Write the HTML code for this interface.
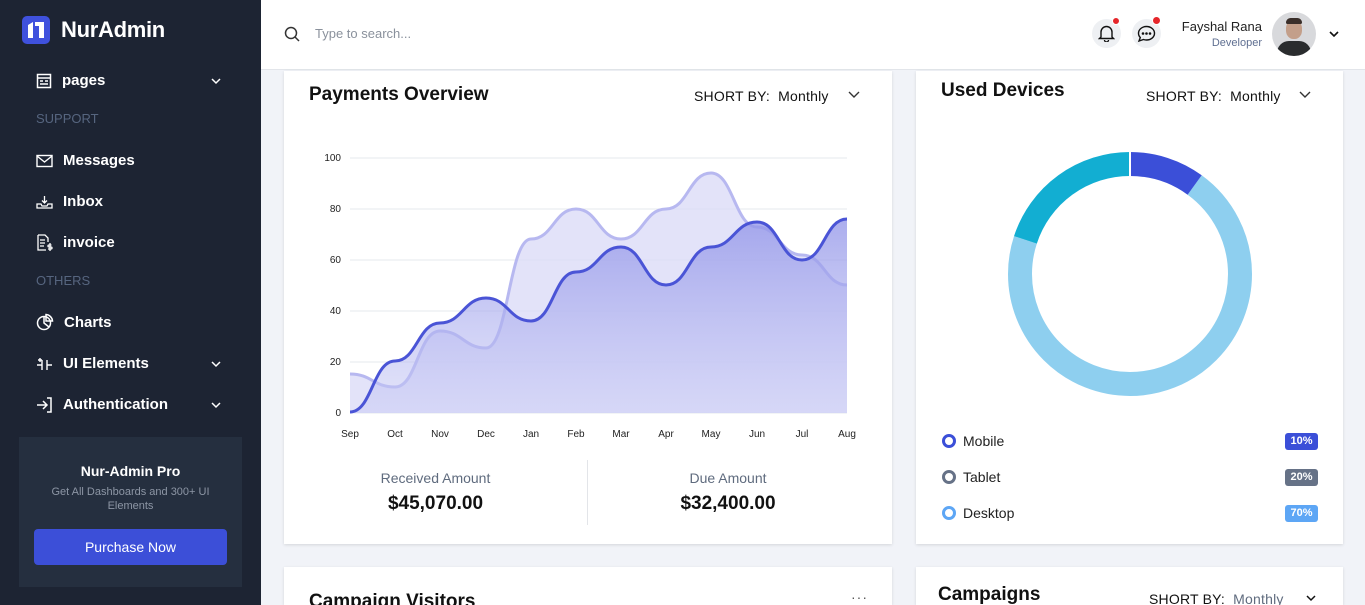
<!DOCTYPE html>
<html style="overflow:hidden;width:1365px;height:605px"><head><meta charset="utf-8"><style>
*{box-sizing:border-box;margin:0;padding:0}
body{width:1365px;height:605px;overflow:hidden;background:#f1f3f8;font-family:"Liberation Sans",sans-serif;position:relative}
.sb{position:absolute;left:0;top:0;width:261px;height:605px;background:#1d2433;color:#fff}
.logo{position:absolute;left:22px;top:16px;width:28px;height:28px;background:#3f51dd;border-radius:5px}
.brand{position:absolute;left:61px;top:17px;font-size:22px;font-weight:bold;letter-spacing:-0.3px}
.it{position:absolute;left:36px;font-size:15px;font-weight:bold;display:flex;align-items:center}
.it svg{margin-right:10px}
.sec{position:absolute;left:36px;font-size:13px;color:#56657f}
.chev{position:absolute;left:210px}
.pro{position:absolute;left:19px;top:437px;width:223px;height:150px;background:#252f3f;text-align:center}
.hdr{position:absolute;left:261px;top:0;width:1104px;height:70px;background:#fff;border-bottom:1px solid #e2e5ea}
.card{position:absolute;background:#fff;box-shadow:0 1px 3px rgba(0,0,0,.12)}
.t{font-size:19px;font-weight:bold;color:#111;position:absolute}
.sort{position:absolute;font-size:14px;color:#111;letter-spacing:.2px}
.lg{position:absolute;left:942px;font-size:14px;color:#222;display:flex;align-items:center}
.lg i{width:14px;height:14px;border:3px solid;border-radius:50%;margin-right:7px}
.bd{position:absolute;left:1285px;width:33px;height:17px;border-radius:3px;color:#fff;font-size:11px;font-weight:bold;text-align:center;line-height:17px}
</style></head><body>
<div class="sb">
 <div class="logo"><svg width="28" height="28"><path d="M6 9 L11 6 V22 H6Z M13 6 H22 V22 H17 V10 H13Z" fill="#fff"/></svg></div>
 <div class="brand">NurAdmin</div>
 <div class="it" style="top:72px"><svg width="16" height="16" fill="none" stroke="#fff" stroke-width="1.5"><rect x="1.5" y="1.5" width="13" height="13"/><path d="M1.5 5h13M4 8h3M4 11h8M9 8h3"/></svg>pages</div>
 <svg class="chev" style="top:76px" width="12" height="10"><path d="M2 3l4 4 4-4" stroke="#fff" stroke-width="1.5" fill="none"/></svg>
 <div class="sec" style="top:111px">SUPPORT</div>
 <div class="it" style="top:152px"><svg width="17" height="14" fill="none" stroke="#fff" stroke-width="1.4"><rect x="1" y="1.5" width="15" height="11"/><path d="M1 2l7.5 6L16 2"/></svg>Messages</div>
 <div class="it" style="top:193px"><svg width="17" height="14" fill="none" stroke="#fff" stroke-width="1.3"><path d="M8.5 1v7M6 5.5l2.5 2.5 2.5-2.5M1 9h4l1 2h5l1-2h4v4H1z"/></svg>Inbox</div>
 <div class="it" style="top:234px"><svg width="17" height="17" fill="none" stroke="#fff" stroke-width="1.3"><path d="M2 1h7l3 3v4M2 1v15h8M4 6h5M4 9h5M4 12h4M14 9v8M15.5 11h-2.5a1 1 0 000 2h2a1 1 0 010 2H12"/></svg>invoice</div>
 <div class="sec" style="top:273px">OTHERS</div>
 <div class="it" style="top:313px"><svg width="18" height="18" fill="none" stroke="#fff" stroke-width="1.5"><circle cx="8" cy="10" r="6.5"/><path d="M8 3.5V10l5 4M10 1.5a7 7 0 016.5 6.5H10z"/></svg>Charts</div>
 <div class="it" style="top:355px"><svg width="17" height="14" fill="none" stroke="#fff" stroke-width="1.4"><path d="M1 8h5M6 3v10M11 3v10M11 8h5M2 3h4M4 1v4"/></svg>UI Elements</div>
 <svg class="chev" style="top:359px" width="12" height="10"><path d="M2 3l4 4 4-4" stroke="#fff" stroke-width="1.5" fill="none"/></svg>
 <div class="it" style="top:396px"><svg width="17" height="16" fill="none" stroke="#fff" stroke-width="1.5"><path d="M1 8h10M7 4l4 4-4 4M11 1h4v14h-4"/></svg>Authentication</div>
 <svg class="chev" style="top:400px" width="12" height="10"><path d="M2 3l4 4 4-4" stroke="#fff" stroke-width="1.5" fill="none"/></svg>
 <div class="pro">
  <div style="margin-top:26px;font-size:14px;font-weight:bold">Nur-Admin Pro</div>
  <div style="margin-top:6px;font-size:11px;color:#8d96a5;line-height:14px;padding:0 24px">Get All Dashboards and 300+ UI Elements</div>
  <div style="margin:16px auto 0;width:193px;height:36px;background:#3c4fd8;border-radius:4px;line-height:36px;font-size:14px">Purchase Now</div>
 </div>
</div>
<div class="hdr">
 <svg style="position:absolute;left:23px;top:26px" width="16" height="16" fill="none" stroke="#333" stroke-width="1.5"><circle cx="7" cy="7" r="5.5"/><path d="M11 11l4 4"/></svg>
 <div style="position:absolute;left:54px;top:26px;font-size:13px;color:#8a919c">Type to search...</div>
 <div style="position:absolute;left:831px;top:19px;width:29px;height:29px;border-radius:50%;background:#eef0f3"></div>
 <svg style="position:absolute;left:837px;top:24px" width="17" height="18" fill="none" stroke="#111" stroke-width="1.4"><path d="M3 13V8a5.5 5.5 0 0111 0v5l1.5 1.5h-14zM6.5 16a2 2 0 004 0"/></svg>
 <div style="position:absolute;left:851px;top:17px;width:8px;height:8px;border-radius:50%;background:#e5252a;border:1px solid #fff"></div>
 <div style="position:absolute;left:871px;top:19px;width:29px;height:29px;border-radius:50%;background:#eef0f3"></div>
 <svg style="position:absolute;left:876px;top:25px" width="19" height="18" fill="none" stroke="#111" stroke-width="1.4"><path d="M9.5 1.5c4.5 0 8 3 8 6.8s-3.5 6.7-8 6.7c-1 0-2-.1-3-.5L2 16l1.3-3.5C2 11.3 1.5 9.8 1.5 8.3c0-3.8 3.5-6.8 8-6.8z"/><circle cx="6" cy="8.5" r=".6" fill="#111"/><circle cx="9.5" cy="8.5" r=".6" fill="#111"/><circle cx="13" cy="8.5" r=".6" fill="#111"/></svg>
 <div style="position:absolute;left:891px;top:16px;width:9px;height:9px;border-radius:50%;background:#e5252a;border:1px solid #fff"></div>
 <div style="position:absolute;right:103px;top:19px;font-size:13px;color:#222;text-align:right">Fayshal Rana<div style="font-size:11px;color:#5f6f91;margin-top:3px">Developer</div></div>
 <div style="position:absolute;left:1011px;top:12px;width:44px;height:44px;border-radius:50%;background:#d8d9dc;overflow:hidden"><div style="position:absolute;left:14px;top:8px;width:16px;height:19px;border-radius:45%;background:#c39f8a"></div><div style="position:absolute;left:14px;top:6px;width:16px;height:6px;border-radius:6px 6px 2px 2px;background:#3a2f2a"></div><div style="position:absolute;left:5px;top:29px;width:34px;height:20px;border-radius:12px 12px 0 0;background:#2a2c2e"></div></div>
 <svg style="position:absolute;left:1067px;top:29px" width="12" height="10"><path d="M2 3l4 4 4-4" stroke="#111" stroke-width="1.6" fill="none"/></svg>
</div>

<div class="card" style="left:284px;top:71px;width:608px;height:473px">
 <div class="t" style="left:25px;top:13px">Payments Overview</div>
 <div class="sort" style="left:410px;top:17px">SHORT BY: &nbsp;Monthly</div>
 <svg style="position:absolute;left:563px;top:19px" width="14" height="10"><path d="M2 2l5 5 5-5" stroke="#333" stroke-width="1.4" fill="none"/></svg>
</div>
<svg style="position:absolute;left:300px;top:140px" width="580" height="305" font-family="Liberation Sans" font-size="10" fill="#222">
 <defs><linearGradient id="g1" x1="0" y1="0" x2="0" y2="1"><stop offset="0" stop-color="#8f92e8" stop-opacity=".75"/><stop offset="1" stop-color="#c9cbf5" stop-opacity=".5"/></linearGradient></defs>
 <g transform="translate(-300,-140)">
 <g stroke="#e6e8ec" stroke-width="1"><path d="M350 158H847M350 209H847M350 260H847M350 311H847M350 362H847M350 413H847"/></g>
 <g text-anchor="end"><text x="341" y="161">100</text><text x="341" y="212">80</text><text x="341" y="263">60</text><text x="341" y="314">40</text><text x="341" y="365">20</text><text x="341" y="416">0</text></g>
 <g text-anchor="middle"><text x="350" y="437">Sep</text><text x="395" y="437">Oct</text><text x="440" y="437">Nov</text><text x="486" y="437">Dec</text><text x="531" y="437">Jan</text><text x="576" y="437">Feb</text><text x="621" y="437">Mar</text><text x="666" y="437">Apr</text><text x="711" y="437">May</text><text x="757" y="437">Jun</text><text x="802" y="437">Jul</text><text x="847" y="437">Aug</text></g>
 <path d="M350 374C372 374 373 387 395 387S418 331 440 331 464 348 486 348 509 239 531 239 554 209 576 209 599 239 621 239 644 209 666 209 689 173 711 173 735 227 757 227 780 255 802 255 825 285 847 285V413H350Z" fill="#dcdcf8" opacity=".8"/>
 <path d="M350 374C372 374 373 387 395 387S418 331 440 331 464 348 486 348 509 239 531 239 554 209 576 209 599 239 621 239 644 209 666 209 689 173 711 173 735 227 757 227 780 255 802 255 825 285 847 285" fill="none" stroke="#b7b8f0" stroke-width="3"/>
 <path d="M350 412C372 412 373 361 395 361S418 323 440 323 464 298 486 298 509 321 531 321 554 272 576 272 599 247 621 247 644 285 666 285 689 247 711 247 735 222 757 222 780 260 802 260 825 219 847 219V413H350Z" fill="url(#g1)"/>
 <path d="M350 412C372 412 373 361 395 361S418 323 440 323 464 298 486 298 509 321 531 321 554 272 576 272 599 247 621 247 644 285 666 285 689 247 711 247 735 222 757 222 780 260 802 260 825 219 847 219" fill="none" stroke="#4a54d6" stroke-width="3"/>
 </g>
</svg>
<div style="position:absolute;left:587px;top:460px;width:1px;height:65px;background:#e3e5e9"></div>
<div style="position:absolute;left:284px;top:470px;width:303px;text-align:center;font-size:14px;color:#5f6b7e">Received Amount<div style="font-size:19px;font-weight:bold;color:#111;margin-top:7px">$45,070.00</div></div>
<div style="position:absolute;left:588px;top:470px;width:280px;text-align:center;font-size:14px;color:#5f6b7e">Due Amount<div style="font-size:19px;font-weight:bold;color:#111;margin-top:7px">$32,400.00</div></div>

<div class="card" style="left:916px;top:71px;width:427px;height:473px">
 <div class="t" style="left:25px;top:9px">Used Devices</div>
 <div class="sort" style="left:230px;top:17px">SHORT BY: &nbsp;Monthly</div>
 <svg style="position:absolute;left:382px;top:19px" width="14" height="10"><path d="M2 2l5 5 5-5" stroke="#333" stroke-width="1.4" fill="none"/></svg>
</div>
<svg style="position:absolute;left:1000px;top:144px" width="260" height="260">
 <g transform="rotate(-90 130 130)" fill="none" stroke-width="24">
  <circle cx="130" cy="130" r="110" stroke="#8ecfef" stroke-dasharray="483.8 691.2" stroke-dashoffset="-69.1"/>
  <circle cx="130" cy="130" r="110" stroke="#12aed2" stroke-dasharray="138.2 691.2" stroke-dashoffset="-552.9"/>
  <circle cx="130" cy="130" r="110" stroke="#3b4fd8" stroke-dasharray="69.1 691.2"/>
 </g>
 <path d="M130 6V34" stroke="#fff" stroke-width="2"/>
</svg>
<div class="lg" style="top:433px"><i style="border-color:#3b4fd8"></i>Mobile</div>
<div class="lg" style="top:469px"><i style="border-color:#667287"></i>Tablet</div>
<div class="lg" style="top:505px"><i style="border-color:#5da6f5"></i>Desktop</div>
<div class="bd" style="top:433px;background:#3b4fd8">10%</div>
<div class="bd" style="top:469px;background:#667287">20%</div>
<div class="bd" style="top:505px;background:#5da6f5">70%</div>

<div class="card" style="left:284px;top:567px;width:608px;height:38px;overflow:hidden">
 <div class="t" style="left:25px;top:24px">Campaign Visitors</div>
 <div style="position:absolute;left:567px;top:22px;font-size:14px;color:#555;letter-spacing:1px">···</div>
</div>
<div class="card" style="left:916px;top:567px;width:427px;height:38px;overflow:hidden">
 <div class="t" style="left:22px;top:17px">Campaigns</div>
 <div class="sort" style="left:233px;top:24px">SHORT BY: &nbsp;<span style="color:#5f6b7e">Monthly</span></div>
 <svg style="position:absolute;left:389px;top:27px" width="12" height="10"><path d="M2 2l4 4 4-4" stroke="#111" stroke-width="1.5" fill="none"/></svg>
</div>
</body></html>
